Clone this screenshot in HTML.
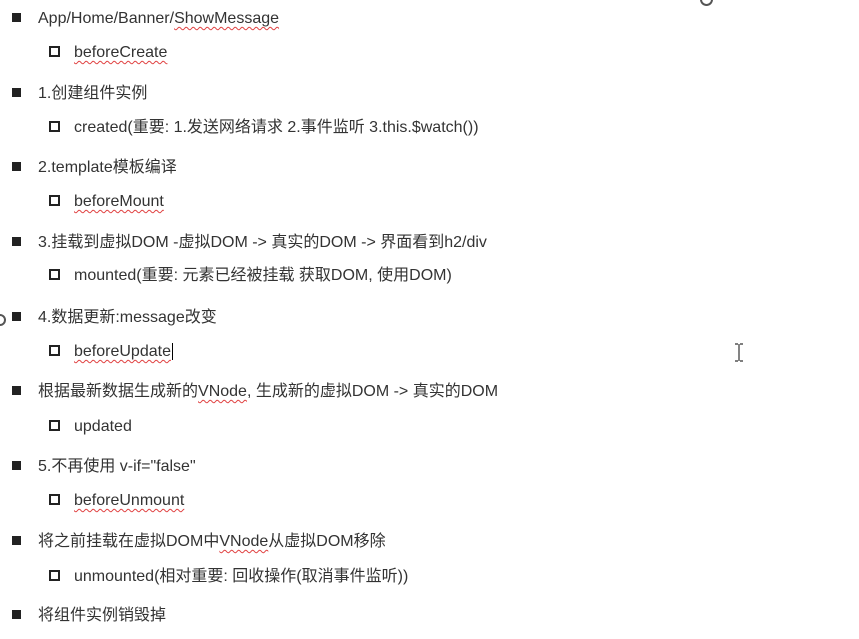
<!DOCTYPE html>
<html><head><meta charset="utf-8"><style>
body{margin:0;width:859px;height:639px;background:#fff;position:relative;overflow:hidden;font-family:"Liberation Sans","Noto Sans CJK SC",sans-serif;font-size:16px;color:#333}
.r{position:absolute;white-space:nowrap;line-height:20px;margin-top:2px}
.b{position:absolute;width:9px;height:9px;background:#222}
.h{position:absolute;width:6px;height:6px;border:2px solid #222;margin-top:0px}
.w{text-decoration:underline wavy #e04040;text-decoration-thickness:1px;text-underline-offset:3px}
</style></head><body>
<div class="b" style="left:12px;top:13px"></div><div class="r" style="left:38px;top:7px">App/Home/Banner/<span class="w">ShowMessage</span></div>
<div class="h" style="left:49px;top:46px"></div><div class="r" style="left:74px;top:41px"><span class="w">beforeCreate</span></div>
<div class="b" style="left:12px;top:88px"></div><div class="r" style="left:38px;top:82px">1.创建组件实例</div>
<div class="h" style="left:49px;top:121px"></div><div class="r" style="left:74px;top:116px">created(重要: 1.发送网络请求 2.事件监听 3.this.$watch())</div>
<div class="b" style="left:12px;top:162px"></div><div class="r" style="left:38px;top:156px">2.template模板编译</div>
<div class="h" style="left:49px;top:195px"></div><div class="r" style="left:74px;top:190px"><span class="w">beforeMount</span></div>
<div class="b" style="left:12px;top:237px"></div><div class="r" style="left:38px;top:231px">3.挂载到虚拟DOM -虚拟DOM -&gt; 真实的DOM -&gt; 界面看到h2/div</div>
<div class="h" style="left:49px;top:269px"></div><div class="r" style="left:74px;top:264px">mounted(重要: 元素已经被挂载 获取DOM, 使用DOM)</div>
<div class="b" style="left:12px;top:312px"></div><div class="r" style="left:38px;top:306px">4.数据更新:message改变</div>
<div class="h" style="left:49px;top:345px"></div><div class="r" style="left:74px;top:340px"><span class="w">beforeUpdate</span><span style="border-left:1.5px solid #000;margin-left:1px"></span></div>
<div class="b" style="left:12px;top:386px"></div><div class="r" style="left:38px;top:380px">根据最新数据生成新的<span class="w">VNode</span>, 生成新的虚拟DOM -&gt; 真实的DOM</div>
<div class="h" style="left:49px;top:420px"></div><div class="r" style="left:74px;top:415px">updated</div>
<div class="b" style="left:12px;top:461px"></div><div class="r" style="left:38px;top:455px">5.不再使用 v-if="false"</div>
<div class="h" style="left:49px;top:494px"></div><div class="r" style="left:74px;top:489px"><span class="w">beforeUnmount</span></div>
<div class="b" style="left:12px;top:536px"></div><div class="r" style="left:38px;top:530px">将之前挂载在虚拟DOM中<span class="w">VNode</span>从虚拟DOM移除</div>
<div class="h" style="left:49px;top:570px"></div><div class="r" style="left:74px;top:565px">unmounted(相对重要: 回收操作(取消事件监听))</div>
<div class="b" style="left:12px;top:610px"></div><div class="r" style="left:38px;top:604px">将组件实例销毁掉</div>
<div style="position:absolute;left:700px;top:-7px;width:9px;height:9px;border:2px solid #555;border-radius:50%"></div>
<div style="position:absolute;left:-6px;top:314px;width:8px;height:8px;border:2px solid #555;border-radius:50%"></div>
<svg style="position:absolute;left:733px;top:343px" width="12" height="20"><path d="M2 1h3M7 1h3M6 1v17M2 18h3M7 18h3" stroke="#333" stroke-width="1.2" fill="none"/></svg>
<style>.h{width:7px;height:7px}</style>
</body></html>
